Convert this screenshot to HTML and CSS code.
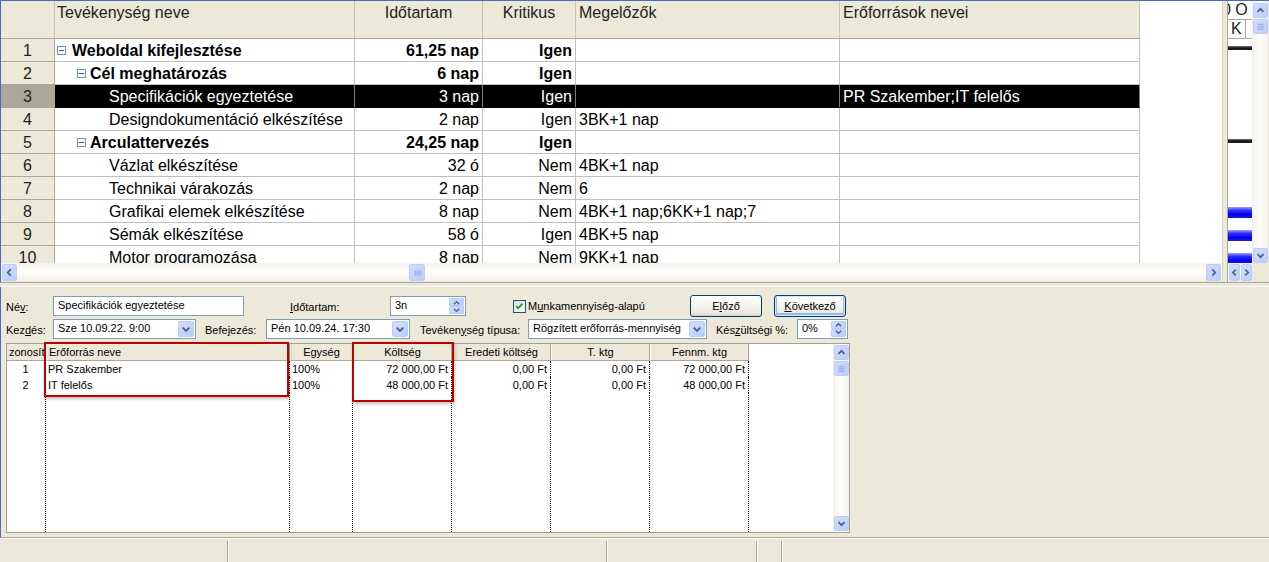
FILE: index.html
```html
<!DOCTYPE html>
<html lang="hu">
<head>
<meta charset="utf-8">
<title>Tevékenység</title>
<link rel="stylesheet" href="styles.css">
</head>
<body>
<div class="app">
  <div class="top">
    <div class="sheet">
      <div class="table">
        <div class="row hdr">
          <div class="c num"></div>
          <div class="c hname">Tevékenység neve</div>
          <div class="c ctr">Időtartam</div>
          <div class="c ctr">Kritikus</div>
          <div class="c">Megelőzők</div>
          <div class="c">Erőforrások nevei</div>
          <div class="c blank"></div>
        </div>
        <div class="row b">
          <div class="c num">1</div>
          <div class="c name l1"><span class="tog"></span>Weboldal kifejlesztése</div>
          <div class="c r">61,25 nap</div>
          <div class="c r">Igen</div>
          <div class="c"></div><div class="c"></div><div class="c blank"></div>
        </div>
        <div class="row b">
          <div class="c num">2</div>
          <div class="c name l2"><span class="tog"></span>Cél meghatározás</div>
          <div class="c r">6 nap</div>
          <div class="c r">Igen</div>
          <div class="c"></div><div class="c"></div><div class="c blank"></div>
        </div>
        <div class="row sel">
          <div class="c num">3</div>
          <div class="c name l3">Specifikációk egyeztetése</div>
          <div class="c r">3 nap</div>
          <div class="c r">Igen</div>
          <div class="c"></div><div class="c">PR Szakember;IT felelős</div><div class="c blank"></div>
        </div>
        <div class="row">
          <div class="c num">4</div>
          <div class="c name l3">Designdokumentáció elkészítése</div>
          <div class="c r">2 nap</div>
          <div class="c r">Igen</div>
          <div class="c">3BK+1 nap</div><div class="c"></div><div class="c blank"></div>
        </div>
        <div class="row b">
          <div class="c num">5</div>
          <div class="c name l2"><span class="tog"></span>Arculattervezés</div>
          <div class="c r">24,25 nap</div>
          <div class="c r">Igen</div>
          <div class="c"></div><div class="c"></div><div class="c blank"></div>
        </div>
        <div class="row">
          <div class="c num">6</div>
          <div class="c name l3">Vázlat elkészítése</div>
          <div class="c r">32 ó</div>
          <div class="c r">Nem</div>
          <div class="c">4BK+1 nap</div><div class="c"></div><div class="c blank"></div>
        </div>
        <div class="row">
          <div class="c num">7</div>
          <div class="c name l3">Technikai várakozás</div>
          <div class="c r">2 nap</div>
          <div class="c r">Nem</div>
          <div class="c">6</div><div class="c"></div><div class="c blank"></div>
        </div>
        <div class="row">
          <div class="c num">8</div>
          <div class="c name l3">Grafikai elemek elkészítése</div>
          <div class="c r">8 nap</div>
          <div class="c r">Nem</div>
          <div class="c">4BK+1 nap;6KK+1 nap;7</div><div class="c"></div><div class="c blank"></div>
        </div>
        <div class="row">
          <div class="c num">9</div>
          <div class="c name l3">Sémák elkészítése</div>
          <div class="c r">58 ó</div>
          <div class="c r">Igen</div>
          <div class="c">4BK+5 nap</div><div class="c"></div><div class="c blank"></div>
        </div>
        <div class="row">
          <div class="c num">10</div>
          <div class="c name l3">Motor programozása</div>
          <div class="c r">8 nap</div>
          <div class="c r">Nem</div>
          <div class="c">9KK+1 nap</div><div class="c"></div><div class="c blank"></div>
        </div>
      </div>
      <div class="hscroll">
        <span class="sb sbh"><svg viewBox="0 0 15 15"><polyline points="9,4 5.5,7.5 9,11"/></svg></span>
        <span class="htrack1"></span>
        <span class="sb thumbh"><svg viewBox="0 0 15 15"><path d="M5 5v6M7 5v6M9 5v6M11 5v6"/></svg></span>
        <span class="htrack2"></span>
        <span class="sb sbh"><svg viewBox="0 0 15 15"><polyline points="6,4 9.5,7.5 6,11"/></svg></span>
      </div>
    </div>
    <div class="splitter"></div>
    <div class="gcol">
      <div class="gantt">
        <div class="gh1"><span>0 O</span></div>
        <div class="gh2"><span class="kbox">K</span></div>
        <div class="gbar black g1"></div>
        <div class="gbar black g5"></div>
        <div class="gbar blue g8"></div>
        <div class="gbar blue g9"></div>
        <div class="gbar blue g10"></div>
      </div>
      <div class="ghs">
        <span class="sb sbg"><svg viewBox="0 0 11 15"><polyline points="7,4 3.5,7.5 7,11"/></svg></span>
        <span class="sb sbg"><svg viewBox="0 0 11 15"><polyline points="4,4 7.5,7.5 4,11"/></svg></span>
      </div>
    </div>
    <div class="vcol">
      <div class="vscroll">
        <span class="sb sbv"><svg viewBox="0 0 15 15"><polyline points="4,9 7.5,5.5 11,9"/></svg></span>
        <span class="sb thumbv"><svg viewBox="0 0 15 15"><path d="M4 5h7M4 7h7M4 9h7M4 11h7"/></svg></span>
        <span class="vtrack"></span>
        <span class="sb sbv"><svg viewBox="0 0 15 15"><polyline points="4,6 7.5,9.5 11,6"/></svg></span>
      </div>
    </div>
  </div>
  <div class="divider"></div>
  <div class="pane">
    <div class="frow r1">
      <span class="lbl w47">Né<u>v</u>:</span>
      <div class="inp w191">Specifikációk egyeztetése</div>
      <span class="lbl ml46 w100"><u>I</u>dőtartam:</span>
      <div class="inp spin w76"><span class="val">3n</span>
        <span class="spb"><span class="sb sp"><svg viewBox="0 0 15 8"><polyline points="4.5,6 7.5,3 10.5,6"/></svg></span><span class="sb sp"><svg viewBox="0 0 15 8"><polyline points="4.5,2 7.5,5 10.5,2"/></svg></span></span>
      </div>
      <span class="chk"><svg viewBox="0 0 13 13"><polyline points="2.5,6 5,8.5 10,3"/></svg></span>
      <span class="lbl chklbl">M<u>u</u>nkamennyiség-alapú</span>
      <button class="btn">E<u>l</u>őző</button>
      <button class="btn def"><u>K</u>övetkező</button>
    </div>
    <div class="frow r2">
      <span class="lbl w47">Kez<u>d</u>és:</span>
      <div class="inp combo w143"><span class="val">Sze 10.09.22. 9:00</span><span class="sb cb"><svg viewBox="0 0 15 17"><polyline points="4,7 7.5,10.5 11,7"/></svg></span></div>
      <span class="lbl ml9 w61">Befe<u>j</u>ezés:</span>
      <div class="inp combo w144"><span class="val">Pén 10.09.24. 17:30</span><span class="sb cb"><svg viewBox="0 0 15 17"><polyline points="4,7 7.5,10.5 11,7"/></svg></span></div>
      <span class="lbl ml10 w108">Tevéken<u>y</u>ség típusa:</span>
      <div class="inp combo w179"><span class="val">Rögzített erőforrás-mennyiség</span><span class="sb cb"><svg viewBox="0 0 15 17"><polyline points="4,7 7.5,10.5 11,7"/></svg></span></div>
      <span class="lbl ml9 w81">Kés<u>z</u>ültségi %:</span>
      <div class="inp spin w51"><span class="val">0%</span>
        <span class="spb"><span class="sb sp"><svg viewBox="0 0 15 8"><polyline points="4.5,6 7.5,3 10.5,6"/></svg></span><span class="sb sp"><svg viewBox="0 0 15 8"><polyline points="4.5,2 7.5,5 10.5,2"/></svg></span></span>
      </div>
    </div>
    <div class="rgrid">
      <div class="gh left">zonosít</div>
      <div class="gh left">Erőforrás neve</div>
      <div class="gh">Egység</div>
      <div class="gh">Költség</div>
      <div class="gh">Eredeti költség</div>
      <div class="gh">T. ktg</div>
      <div class="gh">Fennm. ktg</div>
      <div class="gh gblank"></div>
      <div class="gvs">
        <span class="sb sbv"><svg viewBox="0 0 15 15"><polyline points="4,9 7.5,5.5 11,9"/></svg></span>
        <span class="sb thumbv"><svg viewBox="0 0 15 15"><path d="M4 5h7M4 7h7M4 9h7M4 11h7"/></svg></span>
        <span class="vtrack"></span>
        <span class="sb sbv"><svg viewBox="0 0 15 15"><polyline points="4,6 7.5,9.5 11,6"/></svg></span>
      </div>

      <div class="gd ctr">1</div>
      <div class="gd">PR Szakember</div>
      <div class="gd">100%</div>
      <div class="gd r">72 000,00 Ft</div>
      <div class="gd r">0,00 Ft</div>
      <div class="gd r">0,00 Ft</div>
      <div class="gd r">72 000,00 Ft</div>
      <div class="gd gblank"></div>

      <div class="gd ctr">2</div>
      <div class="gd">IT felelős</div>
      <div class="gd">100%</div>
      <div class="gd r">48 000,00 Ft</div>
      <div class="gd r">0,00 Ft</div>
      <div class="gd r">0,00 Ft</div>
      <div class="gd r">48 000,00 Ft</div>
      <div class="gd gblank"></div>

      <div class="gd"></div><div class="gd"></div><div class="gd"></div><div class="gd"></div>
      <div class="gd"></div><div class="gd"></div><div class="gd"></div><div class="gd gblank"></div>
    </div>
    <div class="hl hl1"></div>
    <div class="hl hl2"></div>
  </div>
  <div class="status">
    <div class="sp1"></div>
    <div class="sp2"></div>
    <div class="sp3"></div>
    <div class="sp4"></div>
    <div class="sp5"></div>
  </div>
</div>
</body>
</html>
```

FILE: styles.css
```css
* { box-sizing: border-box; }
body {
  margin: 0;
  width: 1269px;
  height: 562px;
  overflow: hidden;
  background: #ece9d8;
  font-family: "Liberation Sans", Arial, sans-serif;
  color: #000;
}
.app { width: 1269px; height: 562px; display: flex; flex-direction: column; }

/* ---------- top area ---------- */
.top {
  display: flex;
  height: 282px;
  border-top: 1px solid #4b6bbf;
  border-left: 1px solid #4b6bbf;
}
.sheet { width: 1221px; display: flex; flex-direction: column; }
.table { height: 262px; overflow: hidden; background: #fff; }
.row {
  display: grid;
  grid-template-columns: 54px 300px 128px 93px 264px 300px 1fr;
  height: 23px;
}
.row .c {
  font-size: 16px;
  line-height: 21px;
  padding: 1px 3px 0;
  white-space: nowrap;
  overflow: hidden;
  border-right: 1px solid #c0c0c0;
  border-bottom: 1px solid #c0c0c0;
}
.row .c.blank { border: none; background: #fff; }
.row .num {
  background: #ece9d8;
  text-align: center;
  border-right-color: #aca899;
  border-bottom-color: #aca899;
  color: #222;
}
.row .r { text-align: right; }
.row .ctr { text-align: center; }
.b .c { font-weight: bold; }
.b .num { font-weight: normal; }
.name { display: flex; align-items: center; }
.name.l1 { padding-left: 2px; }
.name.l2 { padding-left: 22px; }
.name.l3 { padding-left: 54px; }
.tog {
  width: 9px; height: 9px;
  border: 1px solid #6f8fc8;
  margin-right: 6px;
  position: relative;
  flex: none;
  background: #fff;
}
.tog::after {
  content: "";
  position: absolute;
  left: 1px; top: 3px;
  width: 5px; height: 1px;
  background: #3a5a9a;
}
.name.l2 .tog { margin-right: 4px; }

.hdr { height: 38px; }
.hdr .c {
  background: #ece9d8;
  line-height: 18px;
  padding-top: 3px;
  border-right: 1px solid #c8c5b4;
  border-bottom: 1px solid #aca899;
  color: #222;
}
.hdr .hname { padding-left: 2px; }
.hdr .c.blank { background: #fff; border: none; }

.sel .c { background: #000; color: #fff; border-bottom-color: #000; border-right-color: #808080; }
.sel .c.num { background: #aca899; color: #222; border-bottom-color: #aca899; border-right-color: #aca899; }
.sel .c.blank { background: #fff; }

/* scrollbars */
.hscroll {
  height: 18px;
  display: flex;
  align-items: center;
  background: linear-gradient(#f3f1ec, #fefefb 40%, #f3f1ec);
  padding: 0 1px;
}
.sb {
  display: flex;
  align-items: center;
  justify-content: center;
  background: linear-gradient(135deg, #d2ddfc, #b9cdfa);
  border: 1px solid #bacdf5;
  border-radius: 2px;
  flex: none;
}
.sb svg { display: block; fill: none; stroke: #4d6185; stroke-width: 2; }
.sbh { width: 15px; height: 17px; }
.sbh svg { width: 13px; height: 13px; }
.htrack1 { width: 392px; }
.thumbh { width: 16px; height: 17px; }
.thumbh svg, .thumbv svg { width: 13px; height: 13px; stroke: #8ba6e8; stroke-width: 1; }
.htrack2 { flex: 1; }

.splitter {
  width: 6px;
  border-left: 1px solid #d8d5c5;
  border-right: 1px solid #aca899;
  background: #ece9d8;
}
.gcol { width: 24px; display: flex; flex-direction: column; }
.gantt { height: 262px; background: #fff; position: relative; overflow: hidden; }
.gh1 {
  height: 19px;
  font-size: 16px;
  line-height: 18px;
  white-space: nowrap;
  overflow: hidden;
  border-bottom: 1px solid #aca899;
}
.gh1 span { margin-left: -6px; color: #222; }
.gh2 { height: 19px; border-bottom: 1px solid #aca899; display: flex; }
.kbox {
  width: 18px;
  font-size: 16px;
  line-height: 18px;
  padding-left: 3px;
  border-right: 1px solid #aca899;
  color: #222;
}
.gbar { position: absolute; left: 0; right: 0; }
.black { height: 4px; background: linear-gradient(#777, #111 50%, #222); }
.g1 { top: 45px; }
.g5 { top: 138px; }
.blue { height: 11px; background: linear-gradient(#a0a0ff, #3030ff 30%, #0000f0 70%, #2020c0); }
.g8 { top: 206px; }
.g9 { top: 229px; }
.g10 { top: 252px; }
.ghs {
  height: 18px;
  display: flex;
  align-items: center;
  gap: 1px;
  padding-left: 1px;
  background: linear-gradient(#f3f1ec, #fefefb 40%, #f3f1ec);
}
.sbg { width: 11px; height: 17px; }
.sbg svg { width: 9px; height: 13px; }

.vcol { width: 16px; display: flex; flex-direction: column; }
.vscroll {
  height: 262px;
  display: flex;
  flex-direction: column;
  align-items: center;
  padding: 2px 0 0;
  background: linear-gradient(90deg, #f3f1ec, #fefefb 50%, #f3f1ec);
}
.sbv { width: 15px; height: 15px; }
.sbv svg { width: 13px; height: 13px; }
.thumbv { width: 15px; height: 15px; margin-top: 1px; }
.vtrack { flex: 1; }

.divider {
  height: 5px;
  border-top: 1px solid #aca899;
  border-bottom: 1px solid #fff;
  background: #ece9d8;
}

/* ---------- bottom pane ---------- */
.pane {
  height: 250px;
  border-left: 1px solid #4b6bbf;
  padding: 8px 0 0 5px;
  position: relative;
  font-size: 11px;
}
.frow { display: flex; align-items: center; }
.r1 { height: 22px; }
.r2 { height: 21px; margin-top: 1px; }
.lbl { white-space: nowrap; flex: none; padding-top: 2px; }
.w47 { width: 47px; }
.w100 { width: 100px; }
.w61 { width: 61px; }
.w108 { width: 108px; }
.w81 { width: 81px; }
.ml46 { margin-left: 46px; }
.ml9 { margin-left: 9px; }
.ml10 { margin-left: 10px; }
.inp {
  height: 20px;
  border: 1px solid #7f9db9;
  background: #fff;
  padding: 1px 0 0 4px;
  line-height: 14px;
  white-space: nowrap;
  overflow: hidden;
  flex: none;
  position: relative;
}
.w191 { width: 191px; }
.w76 { width: 76px; }
.w143 { width: 143px; }
.w144 { width: 144px; }
.w179 { width: 179px; }
.w51 { width: 51px; }
.combo, .spin { display: flex; justify-content: space-between; padding: 0 1px 0 4px; }
.combo .val, .spin .val { padding-top: 1px; }
.cb { width: 16px; height: 16px; margin-top: 1px; }
.cb svg { width: 14px; height: 16px; }
.spb { display: flex; flex-direction: column; gap: 0; margin-top: 1px; }
.sp { width: 15px; height: 8px; border-radius: 1px; }
.sp svg { width: 13px; height: 7px; stroke-width: 1.6; }
.chk {
  width: 13px; height: 13px;
  margin-left: 47px;
  border: 1px solid #1c5180;
  background: linear-gradient(135deg, #dcdcd7, #fff);
  flex: none;
}
.chk svg { width: 11px; height: 11px; display: block; fill: none; stroke: #21a121; stroke-width: 2.2; }
.chklbl { margin-left: 2px; width: 162px; padding-top: 0; }
.btn {
  width: 72px;
  height: 22px;
  border: 1px solid #003c74;
  border-radius: 3px;
  background: linear-gradient(#ffffff, #f4f4f0 50%, #ece9e0 85%, #d6d0c5);
  font-family: "Liberation Sans", Arial, sans-serif;
  font-size: 11px;
  color: #000;
  padding: 0;
  flex: none;
}
.btn + .btn { margin-left: 12px; }
.btn.def { box-shadow: inset 0 0 0 1px #cee7ff, inset 0 -1px 0 2px #98b8ea; }

.rgrid {
  margin-top: 4px;
  width: 844px;
  height: 190px;
  border: 1px solid #a0a0a0;
  background: #fff;
  display: grid;
  grid-template-columns: 39px 244px 63px 99px 99px 99px 99px 1fr 17px;
  grid-template-rows: 17px 16px 16px 1fr;
}
.gh {
  background: #ece9d8;
  border-left: 1px solid #fff;
  border-right: 1px solid #aca899;
  border-bottom: 1px solid #aca899;
  text-align: center;
  line-height: 16px;
  white-space: nowrap;
  overflow: hidden;
}
.gh.left { text-align: left; padding-left: 2px; }
.gh:first-child { border-left: none; }
.gh.gblank { background: #fff; border: none; }
.gvs {
  grid-column: 9;
  grid-row: 1 / -1;
  display: flex;
  flex-direction: column;
  align-items: center;
  padding: 1px 0;
  background: linear-gradient(90deg, #f3f1ec, #fefefb 50%, #f3f1ec);
  border-left: 1px solid #fff;
}
.gd {
  border-right: 1px dotted #000;
  line-height: 16px;
  padding: 0 3px 0 2px;
  white-space: nowrap;
  overflow: hidden;
}
.gd.r { text-align: right; }
.gd.ctr { text-align: center; }
.gd.gblank { border: none; }

.hl {
  position: absolute;
  border: 2px solid #c00000;
  box-shadow: 1px 2px 3px rgba(0,0,0,0.25);
  pointer-events: none;
}
.hl1 { left: 43px; top: 55px; width: 245px; height: 55px; }
.hl2 { left: 351px; top: 55px; width: 102px; height: 60px; }

/* ---------- status bar ---------- */
.status {
  height: 25px;
  display: flex;
  border-top: 1px solid #aca899;
  box-shadow: inset 0 1px 0 #fff;
  background: #ece9d8;
  padding-top: 3px;
}
.status > div { border-right: 1px solid #aca899; box-shadow: 1px 0 0 #fff; }
.sp1 { width: 228px; }
.sp2 { width: 379px; }
.sp3 { width: 150px; }
.sp4 { width: 25px; }
.sp5 { flex: 1; border-right: none !important; box-shadow: none !important; }
```
